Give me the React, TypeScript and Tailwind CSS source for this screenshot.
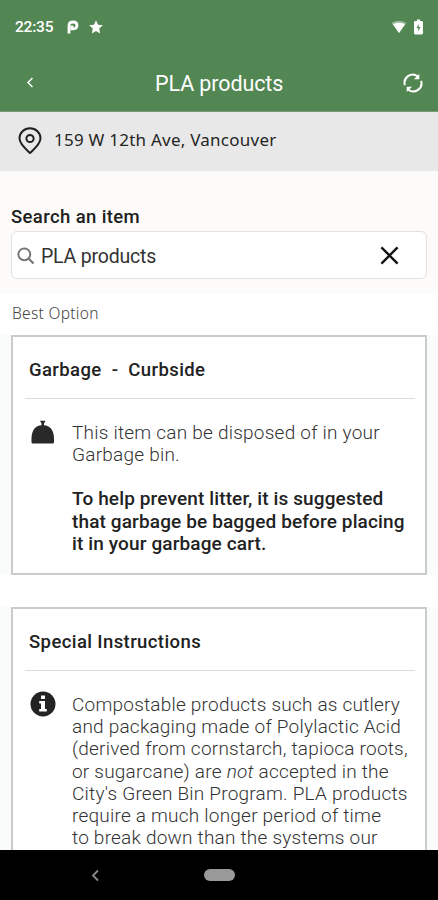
import type { ReactNode } from 'react'

function StatusBar() {
  return (
    <div className="h-[54px] flex items-center pl-[15px] pr-[15px] text-white">
      <span className="text-[15.5px] leading-5 font-medium tracking-[-0.2px]">22:35</span>
      <svg className="ml-[14px] w-[12px] h-[14px]" viewBox="0 0 12 14" fill="none">
        <path d="M2 13.500V5.800C2 3.300 3.700 2 6 2s4 1.200 4 3.300-1.500 3.500-3.500 3.500H5V5.500" stroke="currentColor" strokeWidth="2.800" />
      </svg>
      <svg className="ml-[10px] w-[14px] h-[14px]" viewBox="0 0 14 14" fill="currentColor">
        <path d="M7 .2l2 4.500 4.900.500-3.700 3.300 1 4.900L7 10.900l-4.200 2.500 1-4.900L.1 5.200 5 4.700z" />
      </svg>
      <svg className="ml-auto w-[16px] h-[14px]" viewBox="0 0 16 14" fill="currentColor">
        <path d="M.5 2.900C4.800-.1 11.200-.1 15.500 2.900L8 13z" opacity=".4" />
        <path d="M2 4.300C5.500 2.300 10.500 2.300 14 4.300L8 13z" />
      </svg>
      <svg className="ml-[7px] w-[9px] h-[16px]" viewBox="0 0 9 16">
        <path d="M3 .5h3V2h1.600Q9 2 9 3.400v10.700q0 1.400-1.400 1.400H1.400Q0 15.500 0 14.100V3.400Q0 2 1.400 2H3z" fill="#fff" />
        <path d="M4.700 5L2.500 9h1.700v3.300L6.600 8H4.700z" fill="#528653" />
      </svg>
    </div>
  )
}

function Header() {
  return (
    <header className="bg-[#528653] h-[112px] shrink-0 border-b border-[#799c79] text-white">
      <StatusBar />
      <div className="h-[57px] flex items-center pl-[26px] pr-[15px]">
        <svg className="w-[9px] h-[13px]" viewBox="0 0 9 13" fill="none" stroke="currentColor" strokeWidth="1.500">
          <path d="M6.500 2L2 6.500 6.500 11" />
        </svg>
        <h1 className="ml-[120px] mt-[2px] text-[21.5px] leading-7 tracking-[-0.1px]">PLA products</h1>
        <svg className="ml-auto w-[20px] h-[20px]" viewBox="0 0 20 20" fill="none" stroke="currentColor" strokeWidth="2">
          <path d="M1.900 12.200A8.200 8.200 0 0 1 14.600 3.200M18.100 7.800A8.200 8.200 0 0 1 5.400 16.800" />
          <path d="M16.300 .9V6.300H10.900zM3.700 19.100V13.700H9.100z" fill="currentColor" stroke="none" />
        </svg>
      </div>
    </header>
  )
}

function AddressBar() {
  return (
    <div className="h-[59px] shrink-0 bg-[#e8e8e8] flex items-center pl-[18px] pb-[3px]">
      <svg className="w-[24px] h-[28px] mt-px" viewBox="0 0 24 28" fill="none" stroke="#202020" strokeWidth="2">
        <path d="M12 26C8.500 22.700 1.500 17.200 1.500 11.300a10.500 10 0 0 1 21 0C22.500 17.200 15.500 22.700 12 26z" strokeLinejoin="round" />
        <circle cx="12" cy="11.500" r="3.600" />
      </svg>
      <span className="ml-[12px] font-['Noto_Sans'] text-[17px] leading-6 tracking-[0.240px] text-[#252525]">
        159 W 12th Ave, Vancouver
      </span>
    </div>
  )
}

function SearchBox() {
  return (
    <div className="h-[122px] shrink-0 bg-[#fcfbf9] px-[11px] pt-[33px]">
      <div className="h-[27px] text-[18.5px] leading-[27px] font-medium tracking-[0.380px] text-[#202020]">Search an item</div>
      <div className="h-[48px] rounded-[6px] border border-[#e2e1df] bg-white flex items-center pl-[5px] pr-[27px]">
        <svg className="w-[18px] h-[18px] mt-px" viewBox="0 0 18 18" fill="none" stroke="#777" strokeWidth="2">
          <circle cx="7.300" cy="7.300" r="5.900" />
          <path d="M11.500 11.500l5 5" strokeWidth="2.300" />
        </svg>
        <span className="ml-[6px] mt-[3px] text-[19.5px] leading-6 tracking-[-0.2px] text-[#333]">PLA products</span>
        <svg className="ml-auto w-[19px] h-[19px]" viewBox="0 0 20 20" stroke="#111" strokeWidth="2.500">
          <path d="M1.500 1.500l17 17M18.500 1.500l-17 17" />
        </svg>
      </div>
    </div>
  )
}

function Card({ title, icon, className, children }: { title: string; icon: ReactNode; className: string; children: ReactNode }) {
  return (
    <section className={`mx-[11px] shrink-0 border-2 border-[#c9cccb] bg-white pl-[12px] pr-[10px] ${className}`}>
      <h2 className="h-[62px] border-b border-[#dcdcdc] pl-[4px] pt-[5px] text-[18.5px] leading-[56px] font-medium tracking-[0.400px] whitespace-pre text-[#222]">
        {title}
      </h2>
      <div className="flex pl-[5px] pt-[23px]">
        <div className="w-[42px] shrink-0">{icon}</div>
        <div className="text-[19px] leading-[22.200px] whitespace-nowrap text-[#333]">{children}</div>
      </div>
    </section>
  )
}

function BagIcon() {
  return (
    <svg className="ml-px w-[24px] h-[25px] -mt-[2px]" viewBox="0 0 24 25" fill="#292929">
      <path d="M9 .8h5.500L13 3.500v1.800c3 .2 5.300 1.300 7 3.300 2.200 2.600 3 6.500 3 10.500v3.100q0 1.300-1.300 1.300H1.800Q.5 23.500.5 22.200v-3.100c0-4 .8-7.900 3-10.500 1.700-2 4-3.100 7-3.300V3.500z" />
    </svg>
  )
}

function InfoIcon() {
  return (
    <svg className="w-[26px] h-[26px] -mt-[3px]" viewBox="0 0 26 26">
      <circle cx="13" cy="13" r="12.500" fill="#232323" />
      <path d="M11 4.500h4v3.600h-4zM9.200 10h5.800v8h1.800v2.500H9.200V18H11v-5.500H9.200z" fill="#fff" />
    </svg>
  )
}

function NavigationBar() {
  return (
    <div className="h-[50px] shrink-0 bg-black flex items-center pl-[91px]">
      <svg className="w-[9px] h-[13px]" viewBox="0 0 9 13" fill="none" stroke="#888" strokeWidth="1.900">
        <path d="M7 1.500l-5 5 5 5" />
      </svg>
      <div className="ml-[104px] w-[31px] h-[12px] rounded-full bg-[#999]" />
    </div>
  )
}

export default function App() {
  return (
    <div className="w-[438px] h-[900px] overflow-hidden bg-white flex flex-col font-[Roboto,sans-serif]">
      <Header />
      <AddressBar />
      <main className="flex-1 min-h-0 overflow-hidden flex flex-col">
        <SearchBox />
        <div className="h-[42px] shrink-0 pl-[12px] pt-[10px] font-['Noto_Sans'] font-light text-[15.5px] leading-5 tracking-[0.3px] text-[#444]">
          Best Option
        </div>
        <div className="bg-[#fafcfb]">
          <Card title="Garbage  -  Curbside" icon={<BagIcon />} className="h-[240px]">
            <p className="font-light tracking-[0.230px]">This item can be disposed of in your<br />Garbage bin.</p>
            <p className="mt-[22px] font-medium tracking-[0.130px] text-[#222]">
              To help prevent litter, it is suggested<br />that garbage be bagged before placing<br />it in your garbage cart.
            </p>
          </Card>
        </div>
        <div className="mt-[32px] bg-[#fafcfb]">
          <Card title="Special Instructions" icon={<InfoIcon />} className="h-[340px]">
            <p className="font-light tracking-[0.220px]">
              Compostable products such as cutlery<br />
              and packaging made of Polylactic Acid<br />
              (derived from cornstarch, tapioca roots,<br />
              or sugarcane) are <em>not</em> accepted in the<br />
              City's Green Bin Program. PLA products<br />
              require a much longer period of time<br />
              to break down than the systems our
            </p>
          </Card>
        </div>
      </main>
      <NavigationBar />
    </div>
  )
}
